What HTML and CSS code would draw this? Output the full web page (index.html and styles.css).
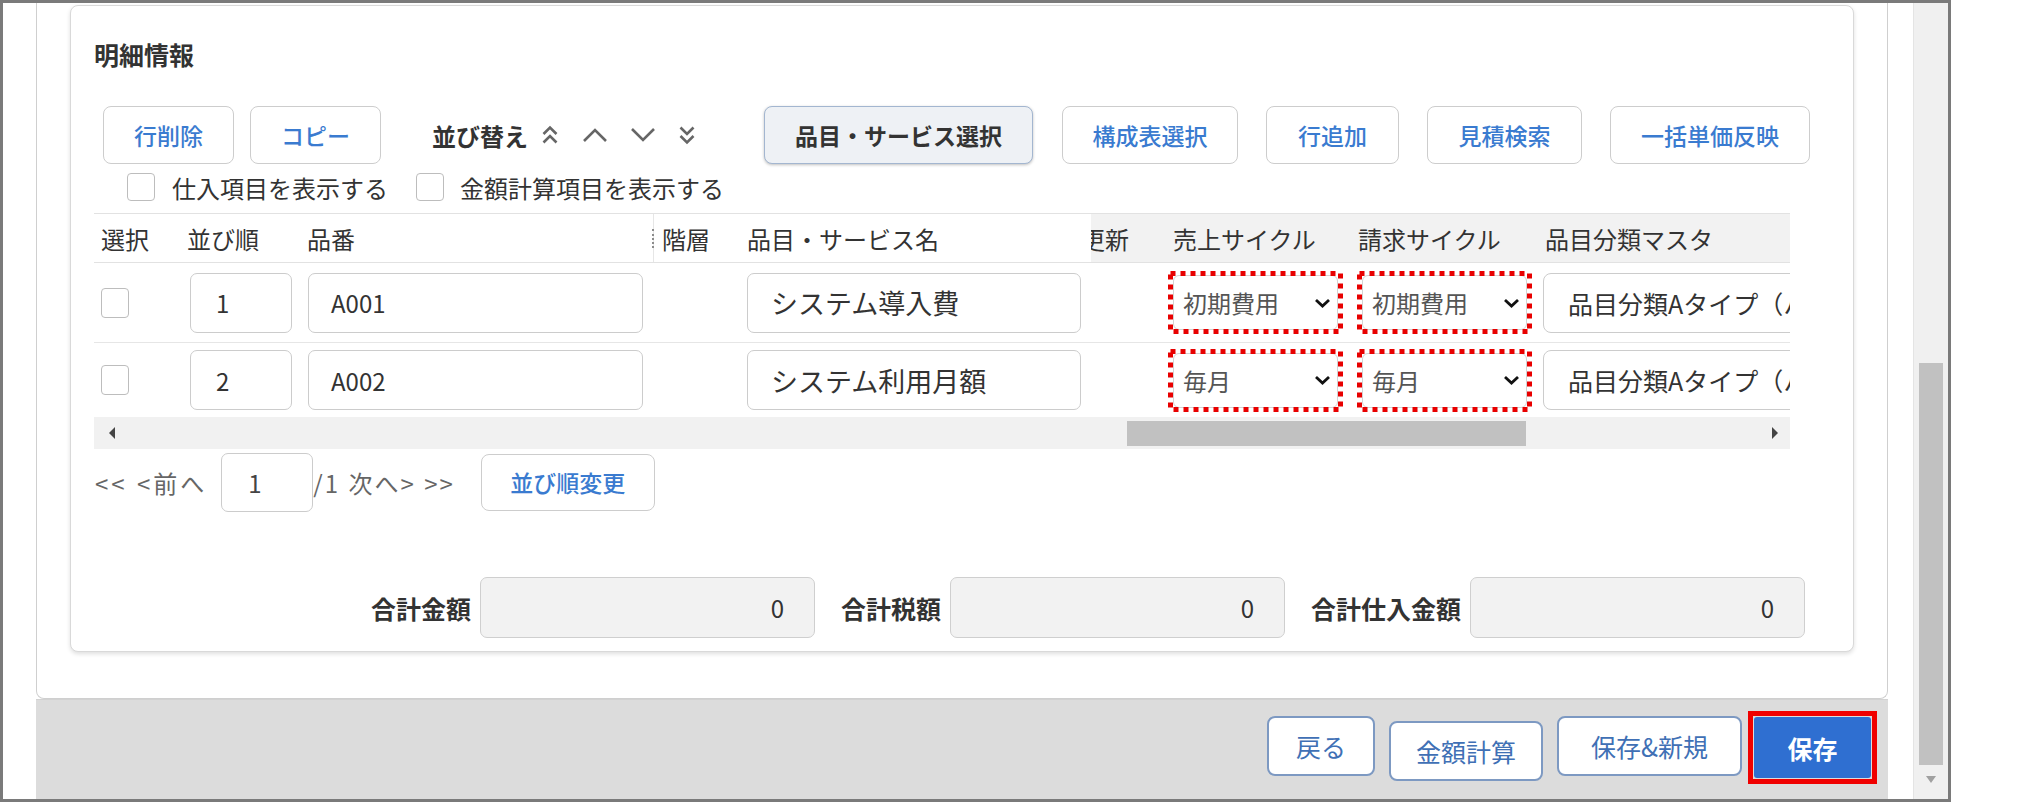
FILE: index.html
```html
<!DOCTYPE html>
<html lang="ja">
<head>
<meta charset="utf-8">
<title>明細情報</title>
<link rel="stylesheet" href="styles.css">
</head>
<body>
<div class="frame">
  <div class="viewport">
    <div class="outer">
      <section class="card">
        <h2 class="title">明細情報</h2>

        <div class="toolbar">
          <button class="btn w131">行削除</button>
          <button class="btn w131 ml16">コピー</button>
          <div class="sort">
            <span class="sort-label">並び替え</span>
            <svg class="ic ic-top" width="18" height="22" viewBox="0 0 18 22"><path d="M2.5 10 L9 3.5 L15.5 10 M2.5 18.5 L9 12 L15.5 18.5" fill="none" stroke="#666" stroke-width="2.6"/></svg>
            <svg class="ic ic-up" width="26" height="16" viewBox="0 0 26 16"><path d="M2 14 L13 3 L24 14" fill="none" stroke="#666" stroke-width="2.6"/></svg>
            <svg class="ic ic-down" width="26" height="16" viewBox="0 0 26 16"><path d="M2 2 L13 13 L24 2" fill="none" stroke="#666" stroke-width="2.6"/></svg>
            <svg class="ic ic-bottom" width="18" height="22" viewBox="0 0 18 22"><path d="M2.5 3.5 L9 10 L15.5 3.5 M2.5 12 L9 18.5 L15.5 12" fill="none" stroke="#666" stroke-width="2.6"/></svg>
          </div>
          <button class="btn btn-focus">品目・サービス選択</button>
          <div class="btn-group">
            <button class="btn w176">構成表選択</button>
            <button class="btn w133">行追加</button>
            <button class="btn w155">見積検索</button>
            <button class="btn w200">一括単価反映</button>
          </div>
        </div>

        <div class="checks">
          <span class="cb"></span><span class="lbl">仕入項目を表示する</span>
          <span class="cb cb2"></span><span class="lbl lbl2">金額計算項目を表示する</span>
        </div>

        <div class="table">
          <div class="trow thead">
            <div class="th">選択</div>
            <div class="th">並び順</div>
            <div class="th">品番</div>
            <div class="th th-div">階層</div>
            <div class="th th-name">品目・サービス名</div>
            <div class="scroll scroll-head">
              <div class="scroll-inner">
                <div class="th sc-upd">更新</div>
                <div class="th sc-sales">売上サイクル</div>
                <div class="th sc-bill">請求サイクル</div>
                <div class="th sc-cls">品目分類マスタ</div>
              </div>
            </div>
          </div>

          <div class="trow r1">
            <div class="td td-cb"><span class="cb cb-row"></span></div>
            <div class="td td-no"><div class="inp inp-no">1</div></div>
            <div class="td td-code"><div class="inp inp-code">A001</div></div>
            <div class="td"></div>
            <div class="td td-name"><div class="inp inp-name">システム導入費</div></div>
            <div class="scroll">
              <div class="scroll-inner">
                <div class="sc-upd"></div>
                <div class="sc-sales sc-cell">
                  <div class="mark">
                    <div class="sel"><span>初期費用</span><svg width="17" height="10" viewBox="0 0 17 10"><path d="M2 2 L8.5 8 L15 2" fill="none" stroke="#111" stroke-width="2.8"/></svg></div>
                    <svg class="dots" width="175" height="63" viewBox="0 0 175 63"><rect x="2.5" y="2.5" width="170" height="58" fill="none" stroke="#e80000" stroke-width="5" stroke-dasharray="5 5"/></svg>
                  </div>
                </div>
                <div class="sc-bill sc-cell">
                  <div class="mark">
                    <div class="sel"><span>初期費用</span><svg width="17" height="10" viewBox="0 0 17 10"><path d="M2 2 L8.5 8 L15 2" fill="none" stroke="#111" stroke-width="2.8"/></svg></div>
                    <svg class="dots" width="175" height="63" viewBox="0 0 175 63"><rect x="2.5" y="2.5" width="170" height="58" fill="none" stroke="#e80000" stroke-width="5" stroke-dasharray="5 5"/></svg>
                  </div>
                </div>
                <div class="sc-cls sc-cell"><div class="sel-cls">品目分類Aタイプ（ハードウェア）</div></div>
              </div>
            </div>
          </div>

          <div class="trow r2">
            <div class="td td-cb"><span class="cb cb-row"></span></div>
            <div class="td td-no"><div class="inp inp-no">2</div></div>
            <div class="td td-code"><div class="inp inp-code">A002</div></div>
            <div class="td"></div>
            <div class="td td-name"><div class="inp inp-name">システム利用月額</div></div>
            <div class="scroll">
              <div class="scroll-inner">
                <div class="sc-upd"></div>
                <div class="sc-sales sc-cell">
                  <div class="mark">
                    <div class="sel"><span>毎月</span><svg width="17" height="10" viewBox="0 0 17 10"><path d="M2 2 L8.5 8 L15 2" fill="none" stroke="#111" stroke-width="2.8"/></svg></div>
                    <svg class="dots" width="175" height="63" viewBox="0 0 175 63"><rect x="2.5" y="2.5" width="170" height="58" fill="none" stroke="#e80000" stroke-width="5" stroke-dasharray="5 5"/></svg>
                  </div>
                </div>
                <div class="sc-bill sc-cell">
                  <div class="mark">
                    <div class="sel"><span>毎月</span><svg width="17" height="10" viewBox="0 0 17 10"><path d="M2 2 L8.5 8 L15 2" fill="none" stroke="#111" stroke-width="2.8"/></svg></div>
                    <svg class="dots" width="175" height="63" viewBox="0 0 175 63"><rect x="2.5" y="2.5" width="170" height="58" fill="none" stroke="#e80000" stroke-width="5" stroke-dasharray="5 5"/></svg>
                  </div>
                </div>
                <div class="sc-cls sc-cell"><div class="sel-cls">品目分類Aタイプ（ハードウェア）</div></div>
              </div>
            </div>
          </div>

          <div class="hscroll">
            <span class="arr-l"></span>
            <span class="hthumb"></span>
            <span class="arr-r"></span>
          </div>
        </div>

        <div class="pager">
          <span class="pg-prev">&lt;&lt; &lt;前へ</span>
          <div class="pg-input">1</div>
          <span class="pg-next">/1 次へ&gt; &gt;&gt;</span>
          <button class="btn pg-btn">並び順変更</button>
        </div>

        <div class="totals">
          <span class="tl">合計金額</span>
          <div class="tin">0</div>
          <span class="tl">合計税額</span>
          <div class="tin">0</div>
          <span class="tl">合計仕入金額</span>
          <div class="tin tin-last">0</div>
        </div>
      </section>
    </div>

    <div class="footer">
      <button class="fbtn fb-back">戻る</button>
      <button class="fbtn fb-calc">金額計算</button>
      <button class="fbtn fb-new">保存&amp;新規</button>
      <div class="save-wrap"><button class="save">保存</button></div>
    </div>
  </div>

  <div class="vscroll">
    <span class="vthumb"></span>
    <span class="varr"></span>
  </div>
</div>
</body>
</html>
```

FILE: styles.css
```css
* { box-sizing: border-box; }

body {
  margin: 0;
  width: 2027px;
  height: 810px;
  overflow: hidden;
  background: #fff;
  font-family: "Noto Sans CJK JP", "Noto Sans", sans-serif;
  font-size: 24px;
  color: #333;
}

button { font-family: inherit; padding: 0; cursor: pointer; }

.frame {
  width: 1951px;
  height: 802px;
  border: 3px solid #7a7a7a;
  display: flex;
  overflow: hidden;
  background: #fff;
}

.viewport {
  width: 1910px;
  flex: none;
  display: flex;
  flex-direction: column;
  padding: 0 25px 0 33px;
}

.outer {
  border: 1px solid #cfcfcf;
  border-top: none;
  border-radius: 0 0 8px 8px;
  padding: 2px 33px 46px;
  background: #fff;
}

.card {
  border: 1px solid #d9d9d9;
  border-radius: 8px;
  box-shadow: 0 2px 4px rgba(0, 0, 0, 0.13);
  padding: 0 44px 13px 23px;
  background: #fff;
}

.title {
  margin: 0;
  padding-top: 33px;
  font-size: 25px;
  font-weight: 700;
  line-height: 30px;
  color: #333;
}

/* toolbar */
.toolbar {
  display: flex;
  align-items: center;
  height: 58px;
  margin-top: 37px;
  padding-left: 9px;
}

.btn {
  height: 58px;
  border: 1px solid #cdcdcd;
  border-radius: 8px;
  background: #fff;
  color: #3a7bd0;
  font-size: 23px;
  font-weight: 500;
  line-height: 1;
  display: flex;
  align-items: center;
  justify-content: center;
  flex: none;
  white-space: nowrap;
}

.w131 { width: 131px; }
.w133 { width: 133px; }
.w155 { width: 155px; }
.w176 { width: 176px; }
.w200 { width: 200px; }
.ml16 { margin-left: 16px; }

.sort {
  display: flex;
  align-items: center;
  flex: none;
  margin-left: 51px;
}

.sort-label {
  font-size: 24px;
  font-weight: 700;
  color: #333;
  white-space: nowrap;
  flex: none;
}

.ic { display: block; flex: none; }
.ic-top { margin-left: 13px; }
.ic-up { margin-left: 23px; }
.ic-down { margin-left: 22px; }
.ic-bottom { margin-left: 22px; }

.btn-focus {
  width: 269px;
  margin-left: 68px;
  background: #eef1f5;
  border-color: #a3b6d0;
  color: #333;
  font-weight: 700;
  box-shadow: 0 1px 3px rgba(0, 0, 0, 0.25);
}

.btn-group {
  display: flex;
  gap: 28px;
  margin-left: 29px;
}

/* checkboxes */
.checks {
  display: flex;
  align-items: center;
  height: 32px;
  margin-top: 7px;
  padding-left: 33px;
}

.cb {
  display: block;
  width: 28px;
  height: 28px;
  border: 1px solid #bdbdbd;
  border-radius: 4px;
  background: #fff;
  flex: none;
}

.lbl { margin-left: 17px; white-space: nowrap; }
.cb2 { margin-left: 28px; }
.lbl2 { margin-left: 16px; }

/* table */
.table {
  margin-top: 10px;
  width: 1696px;
}

.trow {
  display: grid;
  grid-template-columns: 86px 120px 353px 84px 354px 699px;
}

.thead {
  height: 50px;
  border-top: 1px solid #e2e2e2;
  border-bottom: 1px solid #e2e2e2;
}

.th {
  display: flex;
  align-items: center;
  padding-left: 7px;
  white-space: nowrap;
  color: #333;
}

.th-div {
  position: relative;
  border-left: 1px solid #e6e6e6;
  padding-left: 8px;
}

.th-div::before {
  content: "";
  position: absolute;
  left: -2px;
  top: 15px;
  height: 19px;
  border-left: 2px dotted #8c8c8c;
}

.th-name { padding-left: 10px; }

.scroll { overflow: hidden; }
.scroll-head { background: #f2f2f2; }

.scroll-inner {
  display: flex;
  height: 100%;
  margin-left: -10px;
}

.sc-upd { width: 81px; flex: none; padding-left: 0; }
.sc-sales { width: 188px; flex: none; }
.sc-bill { width: 188px; flex: none; }
.sc-cls { width: 340px; flex: none; }

.th.sc-sales { padding-left: 11px; }
.th.sc-bill { padding-left: 8px; }
.th.sc-cls { padding-left: 7px; }

.sc-cell { display: flex; align-items: center; }
.sc-cell.sc-sales { padding-left: 6px; }
.sc-cell.sc-bill { padding-left: 7px; }
.sc-cell.sc-cls { padding-left: 5px; }

.r1 { height: 80px; border-bottom: 1px solid #e6e6e6; }
.r2 { height: 74px; }

.td {
  display: flex;
  align-items: center;
  padding-left: 8px;
}

.td-cb { padding-left: 7px; }
.td-no { padding-left: 10px; }
.td-name { padding-left: 10px; }

.cb-row { height: 30px; }

.inp {
  height: 60px;
  border: 1px solid #cccccc;
  border-radius: 7px;
  background: #fff;
  display: flex;
  align-items: center;
  font-size: 27px;
  color: #333;
  white-space: nowrap;
}

.inp-no { width: 102px; padding-left: 25px; font-size: 24px; }
.inp-code { width: 335px; padding-left: 22px; font-size: 24px; }
.inp-name { width: 334px; padding-left: 23px; }

.mark {
  position: relative;
  width: 175px;
  height: 63px;
  display: flex;
  align-items: center;
  justify-content: center;
  flex: none;
}

.dots {
  position: absolute;
  left: 0;
  top: 0;
}

.sel {
  width: 165px;
  height: 55px;
  border: 1px solid #d3d3d3;
  border-radius: 6px;
  background: #fff;
  display: flex;
  align-items: center;
  justify-content: space-between;
  padding: 0 6px 0 9px;
  color: #555;
  font-size: 24px;
}

.sel svg { display: block; }

.sel-cls {
  width: 330px;
  height: 60px;
  border: 1px solid #cccccc;
  border-radius: 8px;
  background: #fff;
  padding-left: 24px;
  font-size: 25px;
  white-space: nowrap;
  overflow: hidden;
  display: flex;
  align-items: center;
  flex: none;
  color: #333;
}

.hscroll {
  height: 32px;
  background: #f1f1f1;
  display: flex;
  align-items: center;
  padding: 0 12px 0 15px;
}

.arr-l {
  width: 0;
  height: 0;
  border-top: 6px solid transparent;
  border-bottom: 6px solid transparent;
  border-right: 6px solid #444;
}

.hthumb {
  margin-left: 1012px;
  width: 399px;
  height: 25px;
  background: #c1c1c1;
}

.arr-r {
  margin-left: auto;
  width: 0;
  height: 0;
  border-top: 6px solid transparent;
  border-bottom: 6px solid transparent;
  border-left: 6px solid #444;
}

/* pager */
.pager {
  display: flex;
  align-items: center;
  height: 60px;
  margin-top: 3px;
  padding-left: 1px;
  color: #666;
  white-space: nowrap;
}

.pg-prev { letter-spacing: 3px; word-spacing: 1px; }

.pg-input {
  width: 92px;
  height: 59px;
  margin-left: 14px;
  padding-left: 26px;
  border: 1px solid #cccccc;
  border-radius: 7px;
  display: flex;
  align-items: center;
  color: #444;
}

.pg-next { margin-left: 0; letter-spacing: 2px; word-spacing: 1px; }

.pg-btn {
  width: 174px;
  height: 57px;
  margin-left: 26px;
}

/* totals */
.totals {
  display: flex;
  align-items: center;
  justify-content: flex-end;
  height: 61px;
  margin-top: 65px;
  padding-right: 4px;
}

.tl {
  font-size: 25px;
  font-weight: 700;
  margin-right: 9px;
  white-space: nowrap;
  color: #333;
}

.tin {
  width: 335px;
  height: 61px;
  background: #f2f2f2;
  border: 1px solid #cfcfcf;
  border-radius: 7px;
  display: flex;
  align-items: center;
  justify-content: flex-end;
  padding-right: 30px;
  margin-right: 26px;
  color: #333;
}

.tin-last { margin-right: 0; }

/* footer */
.footer {
  flex: 1;
  background: #dcdcdc;
  border-top: 1px solid #d2d2d2;
  display: flex;
  justify-content: flex-end;
  align-items: flex-start;
  padding: 16px 11px 0 0;
}

.fbtn {
  height: 60px;
  border: 2px solid #7d99c2;
  border-radius: 8px;
  background: #fff;
  color: #4070b5;
  font-size: 25px;
  display: flex;
  align-items: center;
  justify-content: center;
  margin-left: 14px;
  flex: none;
}

.fb-back { width: 108px; }
.fb-calc { width: 154px; margin-top: 5px; }
.fb-new { width: 185px; }

.save-wrap {
  margin-left: 6px;
  margin-top: -5px;
  border: 5px solid #f00000;
  padding: 1px;
}

.save {
  display: block;
  width: 117px;
  height: 61px;
  border: none;
  border-radius: 3px;
  background: #2f6fd1;
  color: #fff;
  font-size: 25px;
  font-weight: 700;
}

/* vertical scrollbar */
.vscroll {
  width: 35px;
  flex: none;
  background: #f0f0f0;
  border-left: 1px solid #e4e4e4;
  display: flex;
  flex-direction: column;
  align-items: center;
}

.vthumb {
  display: block;
  width: 24px;
  height: 402px;
  margin-top: 360px;
  background: #c1c1c1;
}

.varr {
  display: block;
  margin-top: auto;
  margin-bottom: 16px;
  width: 0;
  height: 0;
  border-left: 5px solid transparent;
  border-right: 5px solid transparent;
  border-top: 7px solid #a0a0a0;
}
```
